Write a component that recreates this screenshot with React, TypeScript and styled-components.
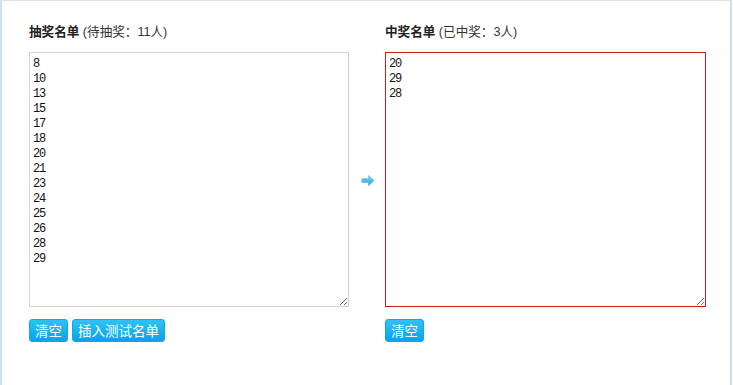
import React from 'react';
import styled, { createGlobalStyle } from 'styled-components';

const GlobalStyle = createGlobalStyle`
  html, body {
    margin: 0;
    padding: 0;
    background: #fff;
  }
  body {
    font-family: "Liberation Sans", "Noto Sans CJK SC", sans-serif;
  }
`;

const Page = styled.div`
  box-sizing: border-box;
  min-height: 100vh;
  margin-right: 1px;
  border-top: 1px solid #dde3e8;
  border-left: 2px solid #c9e1f3;
  border-right: 2px solid #c9e1f3;
  padding: 22px 0 0 27px;
`;

const Board = styled.div`
  display: grid;
  grid-template-columns: 320px 36px 321px;
  grid-template-rows: auto 255px auto;
`;

const Label = styled.div<{ $col: number }>`
  grid-column: ${(p) => p.$col};
  grid-row: 1;
  height: 19px;
  line-height: 19px;
  margin-bottom: 10px;
  font-size: 12.6px;
  color: #333;
  font-family: "Liberation Sans", "Noto Sans CJK SC", sans-serif;

  b {
    font-weight: bold;
    color: #222;
  }
`;

const ListBox = styled.textarea<{ $col: number; $active?: boolean }>`
  grid-column: ${(p) => p.$col};
  grid-row: 2;
  box-sizing: border-box;
  width: 100%;
  height: 255px;
  margin: 0;
  padding: 4px 3px 2px;
  border: 1px solid ${(p) => (p.$active ? '#c81e1e' : '#d3d3d3')};
  outline: none;
  font-family: "Liberation Mono", "DejaVu Sans Mono", monospace;
  font-size: 12px;
  letter-spacing: -1.2px;
  line-height: 15px;
  color: #111;
  background: #fff;
`;

const Arrow = styled.div`
  grid-column: 2;
  grid-row: 2;
  align-self: center;
  justify-self: center;
  display: flex;
  margin-top: 1px;
  margin-left: 1px;
`;

const Actions = styled.div<{ $col: number }>`
  grid-column: ${(p) => p.$col};
  grid-row: 3;
  display: flex;
  gap: 4px;
  margin-top: 12px;
`;

const Button = styled.button`
  box-sizing: border-box;
  height: 23px;
  padding: 0 5px;
  border: 1px solid #12a6e6;
  border-radius: 3px;
  background: linear-gradient(#2ec3f6, #0ba2ea);
  color: #fff;
  font-size: 13.5px;
  line-height: 21px;
  font-family: "Noto Sans CJK SC", sans-serif;
  cursor: pointer;
`;

const pending = ['8', '10', '13', '15', '17', '18', '20', '21', '23', '24', '25', '26', '28', '29'];
const winners = ['20', '29', '28'];

function ArrowIcon() {
  return (
    <svg width="14" height="13" viewBox="0 0 14 13">
      <defs>
        <linearGradient id="ag" x1="0" y1="0" x2="0" y2="1">
          <stop offset="0" stopColor="#7ed3ec" />
          <stop offset="1" stopColor="#2aa6d6" />
        </linearGradient>
      </defs>
      <path d="M0.5 4.3 H7.2 V0.8 L13.5 6.5 L7.2 12.2 V8.7 H0.5 Z" fill="url(#ag)" />
    </svg>
  );
}

export default function App() {
  return (
    <>
      <GlobalStyle />
      <Page>
        <Board>
          <Label $col={1}>
            <b>抽奖名单</b> (待抽奖：11人)
          </Label>
          <ListBox $col={1} defaultValue={pending.join('\n')} spellCheck={false} />
          <Arrow>
            <ArrowIcon />
          </Arrow>
          <Label $col={3}>
            <b>中奖名单</b> (已中奖：3人)
          </Label>
          <ListBox $col={3} $active defaultValue={winners.join('\n')} spellCheck={false} />
          <Actions $col={1}>
            <Button>清空</Button>
            <Button>插入测试名单</Button>
          </Actions>
          <Actions $col={3}>
            <Button>清空</Button>
          </Actions>
        </Board>
      </Page>
    </>
  );
}
